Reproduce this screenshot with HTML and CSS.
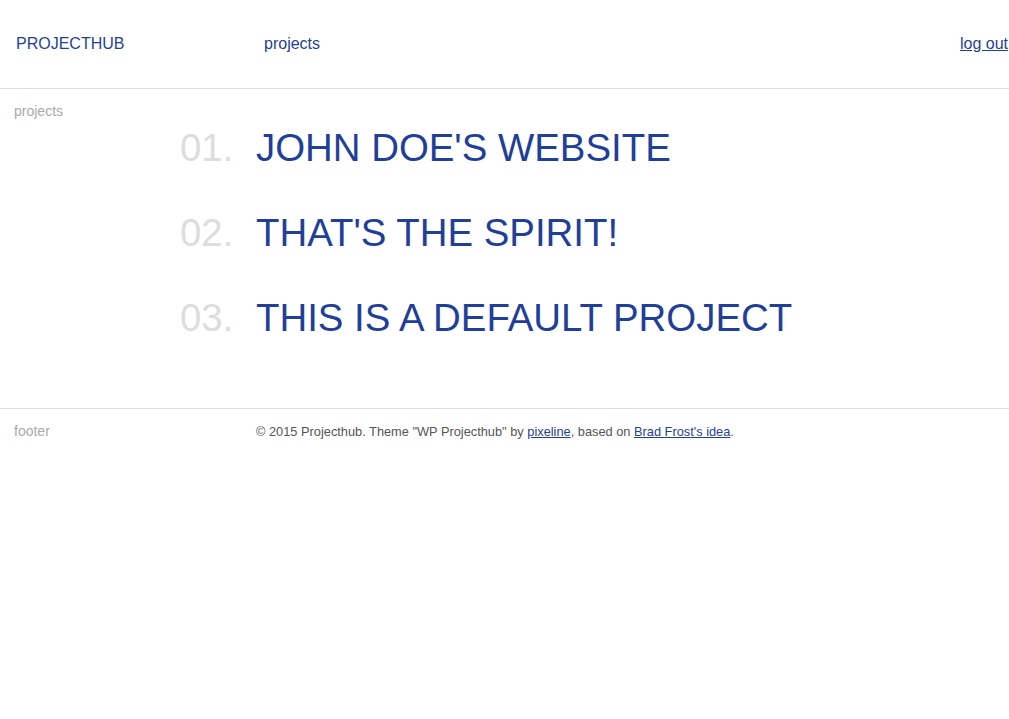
FILE: index.html
```html
<!DOCTYPE html>
<html lang="en">
<head>
<meta charset="utf-8">
<title>Projecthub</title>
<link rel="stylesheet" href="styles.css">
</head>
<body>
<header class="site-header">
  <a class="logo" href="#">PROJECTHUB</a>
  <nav class="main-nav"><a href="#">projects</a></nav>
  <a class="logout" href="#">log out</a>
</header>
<main class="content">
  <aside class="section-label">projects</aside>
  <ol class="project-list">
    <li class="project"><span class="num">01.</span><a class="title" href="#">JOHN DOE'S WEBSITE</a></li>
    <li class="project"><span class="num">02.</span><a class="title" href="#">THAT'S THE SPIRIT!</a></li>
    <li class="project"><span class="num">03.</span><a class="title" href="#">THIS IS A DEFAULT PROJECT</a></li>
  </ol>
</main>
<footer class="site-footer">
  <div class="section-label">footer</div>
  <p class="credits">© 2015 Projecthub. Theme "WP Projecthub" by <a href="#">pixeline</a>, based on <a href="#">Brad Frost's idea</a>.</p>
</footer>
</body>
</html>
```
FILE: styles.css
```css
html, body {
  margin: 0;
  padding: 0;
  background: #fff;
}
body {
  font-family: "Liberation Sans", Arial, Helvetica, sans-serif;
  color: #444;
}
a {
  color: #1f3f99;
}
.site-header {
  display: flex;
  align-items: center;
  height: 88px;
  border-bottom: 1px solid #dddddd;
  padding: 0 1px 0 16px;
  font-size: 16px;
}
.logo {
  width: 248px;
  text-decoration: none;
}
.main-nav {
  flex: 1;
}
.main-nav a {
  text-decoration: none;
}
.logout {
  text-decoration: underline;
}
.content {
  display: grid;
  grid-template-columns: 180px 1fr;
  padding-top: 14px;
}
.section-label {
  font-size: 14px;
  color: #aaaaaa;
  padding-left: 14px;
  line-height: 16px;
}
.project-list {
  list-style: none;
  margin: 0;
  padding: 23px 0 68px;
  display: flex;
  flex-direction: column;
  gap: 41px;
}
.project {
  display: flex;
  font-size: 38.4px;
  line-height: 44px;
}
.num {
  width: 76px;
  color: #dddddd;
}
.title {
  text-decoration: none;
}
.site-footer {
  display: grid;
  grid-template-columns: 256px 1fr;
  align-items: baseline;
  border-top: 1px solid #dddddd;
  padding-top: 14px;
}
.credits {
  margin: 0;
  font-size: 12.8px;
  color: #555;
}
.credits a {
  text-decoration: underline;
}
```
